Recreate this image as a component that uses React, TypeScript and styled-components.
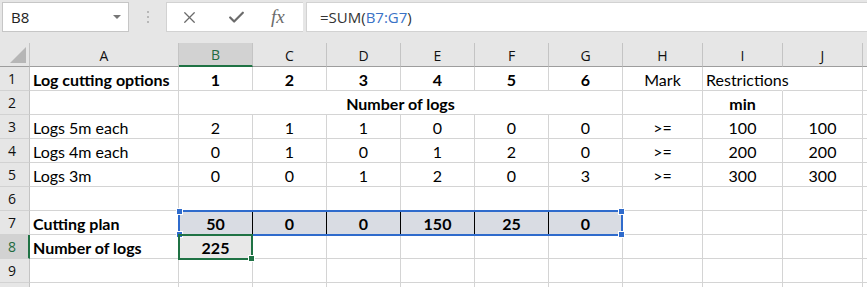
import React from 'react'
import styled, { createGlobalStyle } from 'styled-components'
import { X, Check } from 'lucide-react'

type Cell = {
    text?: string
    bold?: boolean
    align?: 'left' | 'center'
    span?: number
    open?: boolean
    dark?: boolean
    tint?: string
}

const COLS = ['A', 'B', 'C', 'D', 'E', 'F', 'G', 'H', 'I', 'J', '']

const c = (text: string, extra: Partial<Cell> = {}): Cell => ({ text, align: 'center', ...extra })
const nums = (vals: string[], extra: Partial<Cell> = {}) => vals.map(v => c(v, extra))
const blanks = (n: number): Cell[] => Array.from({ length: n }, () => ({}))

const ROWS: Cell[][] = [
    [
        { text: 'Log cutting options', bold: true },
        ...nums(['1', '2', '3', '4', '5', '6'], { bold: true }),
        c('Mark'),
        { text: 'Restrictions', open: true },
        ...blanks(2),
    ],
    [
        {},
        c('Number of logs', { bold: true, span: 6 }),
        {},
        c('min', { bold: true }),
        ...blanks(2),
    ],
    [{ text: 'Logs 5m each' }, ...nums(['2', '1', '1', '0', '0', '0']), c('>='), c('100'), c('100'), {}],
    [{ text: 'Logs 4m each' }, ...nums(['0', '1', '0', '1', '2', '0']), c('>='), c('200'), c('200'), {}],
    [{ text: 'Logs 3m' }, ...nums(['0', '0', '1', '2', '0', '3']), c('>='), c('300'), c('300'), {}],
    blanks(11),
    [
        { text: 'Cutting plan', bold: true },
        ...['50', '0', '0', '150', '25'].map(v => c(v, { bold: true, dark: true, tint: '#d9dce3' })),
        c('0', { bold: true, tint: '#d9dce3' }),
        ...blanks(4),
    ],
    [
        { text: 'Number of logs', bold: true },
        c('225', { bold: true, tint: '#e8e8e8' }),
        ...blanks(9),
    ],
    blanks(11),
    blanks(11),
]

// grid column where each cell starts (column 1 is the row header)
const placed = (row: Cell[]) => {
    let col = 2
    return row.map(cell => {
        const start = col
        col += cell.span || 1
        return { cell, start }
    })
}

const App = () => {
    return (
        <Page>
            <GlobalStyle />
            <Toolbar>
                <NameBox>
                    <span>B8</span>
                    <Caret />
                </NameBox>
                <Grip>
                    <i /><i /><i />
                </Grip>
                <ActionBox>
                    <X size={19} strokeWidth={1.6} />
                    <Check size={19} strokeWidth={2.8} />
                    <Fx>fx</Fx>
                </ActionBox>
                <FormulaBox>
                    =SUM(<Ref>B7:G7</Ref>)
                </FormulaBox>
            </Toolbar>

            <Sheet>
                <Corner><Triangle /></Corner>
                {COLS.map((col, i) => (
                    <ColHead key={col + i} $active={col === 'B'}>{col}</ColHead>
                ))}

                {ROWS.map((row, r) => (
                    <React.Fragment key={r}>
                        {/* the last row is only a sliver, its number is out of view */}
                        <RowHead $row={r + 2} $active={r === 7}>{r < 9 ? r + 1 : ''}</RowHead>
                        {placed(row).map(({ cell, start }) => (
                            <GridCell
                                key={start}
                                $row={r + 2}
                                $col={start}
                                $span={cell.span || 1}
                                $align={cell.align || 'left'}
                                $bold={!!cell.bold}
                                $open={!!cell.open}
                                $dark={!!cell.dark}
                                $tint={cell.tint}
                            >
                                {cell.text}
                            </GridCell>
                        ))}
                    </React.Fragment>
                ))}

                <Selection $row={8} $from={3} $to={9} $color="#2f6bcc">
                    <Handle $color="#2f6bcc" $x="left" $y="top" />
                    <Handle $color="#2f6bcc" $x="left" $y="bottom" />
                    <Handle $color="#2f6bcc" $x="right" $y="top" />
                    <Handle $color="#2f6bcc" $x="right" $y="bottom" />
                </Selection>
                <Selection $row={9} $from={3} $to={4} $color="#1f7244">
                    <Handle $color="#1f7244" $x="right" $y="bottom" />
                </Selection>
            </Sheet>
        </Page>
    )
}

const GlobalStyle = createGlobalStyle`
    html, body {
        margin: 0;
        padding: 0;
        background: #e6e6e6;
        overflow: hidden;
    }
`

const Page = styled.div`
    width: 867px;
    height: 287px;
    overflow: hidden;
    background: #e6e6e6;
    font-family: "Open Sans", "Noto Sans", sans-serif;
`

const Toolbar = styled.div`
    display: flex;
    align-items: flex-start;
    height: 43px;
    padding: 2px 0 0 2px;
    box-sizing: border-box;
`

const NameBox = styled.div`
    width: 127px;
    height: 30px;
    box-sizing: border-box;
    background: #fff;
    border: 1px solid #c6c6c6;
    display: flex;
    align-items: center;
    justify-content: space-between;
    padding: 0 7px 0 8px;
    font-size: 15px;
    color: #222;
`

const Caret = styled.span`
    width: 0;
    height: 0;
    border-left: 4px solid transparent;
    border-right: 4px solid transparent;
    border-top: 4px solid #767676;
`

const Grip = styled.div`
    width: 37px;
    height: 30px;
    display: flex;
    flex-direction: column;
    align-items: center;
    justify-content: center;
    gap: 3px;

    i {
        width: 2px;
        height: 2px;
        background: #b8b8b8;
    }
`

const ActionBox = styled.div`
    width: 137px;
    height: 30px;
    box-sizing: border-box;
    background: #fff;
    border: 1px solid #d2d2d2;
    border-right: none;
    display: flex;
    align-items: center;
    gap: 28px;
    padding-left: 13px;
    color: #6b6b6b;
`

const Fx = styled.span`
    font-family: "Liberation Serif", serif;
    font-style: italic;
    font-size: 19px;
    margin-left: -3px;
    color: #6b6b6b;
`

const FormulaBox = styled.div`
    flex: 1;
    height: 30px;
    margin-left: 3px;
    box-sizing: border-box;
    background: #fff;
    border: 1px solid #d2d2d2;
    border-right: none;
    display: flex;
    align-items: center;
    padding-left: 13px;
    font-size: 15px;
    color: #333;
    white-space: pre;
`

const Ref = styled.span`
    color: #3a72c6;
`

const Sheet = styled.div`
    display: grid;
    grid-template-columns: 30px 149px repeat(6, 74px) 80px 80px 80px 1fr;
    grid-auto-rows: 24px;
    background: #fff;
    font-family: Lato, "Open Sans", sans-serif;
    font-size: 16px;
    color: #000;
`

const Corner = styled.div`
    grid-row: 1;
    grid-column: 1;
    background: #e6e6e6;
    border-right: 1px solid #c4c4c4;
    border-bottom: 1px solid #9d9d9d;
    display: flex;
    align-items: flex-end;
    justify-content: flex-end;
    padding: 0 3px 3px 0;
`

const Triangle = styled.div`
    width: 16px;
    height: 16px;
    background: #b6b6b6;
    clip-path: polygon(100% 0, 100% 100%, 0 100%);
`

const ColHead = styled.div<{ $active: boolean }>`
    grid-row: 1;
    background: ${p => (p.$active ? '#d2d2d2' : '#e6e6e6')};
    border-right: 1px solid #c4c4c4;
    border-bottom: ${p => (p.$active ? '2px solid #1f7244' : '1px solid #9d9d9d')};
    color: ${p => (p.$active ? '#1f6b40' : '#111')};
    font-family: "Open Sans", "Noto Sans", sans-serif;
    font-size: 14px;
    display: flex;
    align-items: center;
    justify-content: center;
    padding-top: 1px;
`

const RowHead = styled.div<{ $row: number; $active: boolean }>`
    grid-row: ${p => p.$row};
    grid-column: 1;
    background: ${p => (p.$active ? '#d2d2d2' : '#e6e6e6')};
    border-right: ${p => (p.$active ? '2px solid #1f7244' : '1px solid #c4c4c4')};
    border-bottom: 1px solid #d2d2d2;
    color: ${p => (p.$active ? '#1f6b40' : '#111')};
    font-family: "Open Sans", "Noto Sans", sans-serif;
    font-size: 14px;
    display: flex;
    align-items: center;
    justify-content: center;
    padding-right: ${p => (p.$active ? '4px' : '5px')};
`

const GridCell = styled.div<{
    $row: number
    $col: number
    $span: number
    $align: 'left' | 'center'
    $bold: boolean
    $open: boolean
    $dark: boolean
    $tint?: string
}>`
    grid-row: ${p => p.$row};
    grid-column: ${p => p.$col} / span ${p => p.$span};
    background: ${p => p.$tint || 'transparent'};
    border-bottom: 1px solid #d4d4d4;
    border-right: ${p => (p.$open ? '1px solid transparent' : p.$dark ? '1px solid #000' : '1px solid #d4d4d4')};
    display: flex;
    align-items: center;
    justify-content: ${p => (p.$align === 'center' ? 'center' : 'flex-start')};
    padding: 1px 3px 0;
    font-weight: ${p => (p.$bold ? 700 : 400)};
    white-space: nowrap;
    overflow: visible;
    position: relative;
    z-index: ${p => (p.$open ? 1 : 0)};
`

const Selection = styled.div<{ $row: number; $from: number; $to: number; $color: string }>`
    grid-row: ${p => p.$row} / ${p => p.$row + 1};
    grid-column: ${p => p.$from} / ${p => p.$to};
    margin: -1px 0 -1px -1px;
    border: 2px solid ${p => p.$color};
    position: relative;
    z-index: 2;
    pointer-events: none;
`

const Handle = styled.div<{ $color: string; $x: 'left' | 'right'; $y: 'top' | 'bottom' }>`
    position: absolute;
    width: 5px;
    height: 5px;
    background: ${p => p.$color};
    border: 1px solid #fff;
    ${p => p.$x}: -4px;
    ${p => p.$y}: -4px;
`

export default App
